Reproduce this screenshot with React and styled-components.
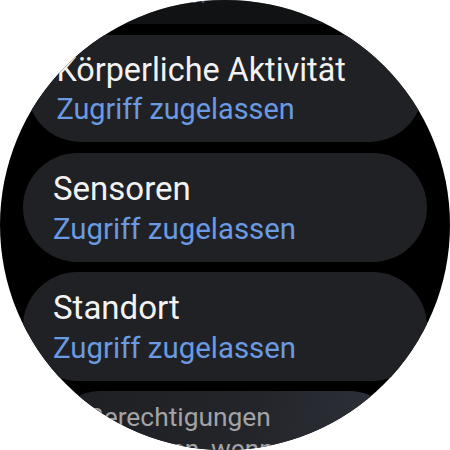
import React from 'react';
import styled, { createGlobalStyle } from 'styled-components';

const GlobalStyle = createGlobalStyle`
	html, body {
		margin: 0;
		padding: 0;
		background: #ffffff;
	}
	body {
		font-family: Roboto, "Noto Sans", "DejaVu Sans", sans-serif;
	}
`;

const permissions = [
	{ title: "Kalender", status: "Zugelassen", scale: 0.9, origin: "center bottom", dim: true },
	{ title: "Körperliche Aktivität", status: "Zugriff zugelassen", scale: 0.98, origin: "center center" },
	{ title: "Sensoren", status: "Zugriff zugelassen", scale: 1, origin: "center center" },
	{ title: "Standort", status: "Zugriff zugelassen", scale: 1, origin: "center center" },
];

const App = () => {
	return (
		<>
			<GlobalStyle />
			<Watch>
				<List>
					{permissions.map((p, i) => {
						return (
							<Chip key={i} $scale={p.scale} $origin={p.origin} $dim={p.dim}>
								<ChipTitle>{p.title}</ChipTitle>
								<ChipStatus>{p.status}</ChipStatus>
							</Chip>
						);
					})}
					<ToggleChip>
						<ToggleLabel>Berechtigungen entfernen, wenn App nicht verwendet wird</ToggleLabel>
					</ToggleChip>
				</List>
			</Watch>
		</>
	);
};

export default App;

const Watch = styled.div`
	width: 450px;
	height: 450px;
	border-radius: 50%;
	overflow: hidden;
	background: #000000;
`;

/* list scrolled so that the "Körperliche Aktivität" chip sits at the top */
const List = styled.div`
	display: flex;
	flex-direction: column;
	align-items: center;
	gap: 10px;
	margin-top: -85px;
`;

const Chip = styled.div`
	box-sizing: border-box;
	width: 404px;
	height: 109px;
	flex-shrink: 0;
	padding: 16px 0 0 30px;
	border-radius: 55px;
	background: #202124;
	transform: scale(${p => p.$scale});
	transform-origin: ${p => p.$origin};
	opacity: ${p => (p.$dim ? 0.55 : 1)};
`;

const ChipTitle = styled.div`
	font-size: 33px;
	line-height: 40px;
	color: #f2f2f2;
	white-space: nowrap;
`;

const ChipStatus = styled.div`
	font-size: 29.4px;
	line-height: 40px;
	color: #6a9ae2;
	white-space: nowrap;
`;

const ToggleChip = styled.div`
	box-sizing: border-box;
	width: 404px;
	min-height: 109px;
	flex-shrink: 0;
	padding: 12px 90px 14px 40px;
	border-radius: 55px;
	background: linear-gradient(100deg, #1e1f23 0%, #23252a 55%, #2f333c 100%);
	transform: scale(0.85);
	transform-origin: center top;
`;

const ToggleLabel = styled.div`
	font-size: 31px;
	line-height: 38px;
	color: #a3a3a5;
`;
